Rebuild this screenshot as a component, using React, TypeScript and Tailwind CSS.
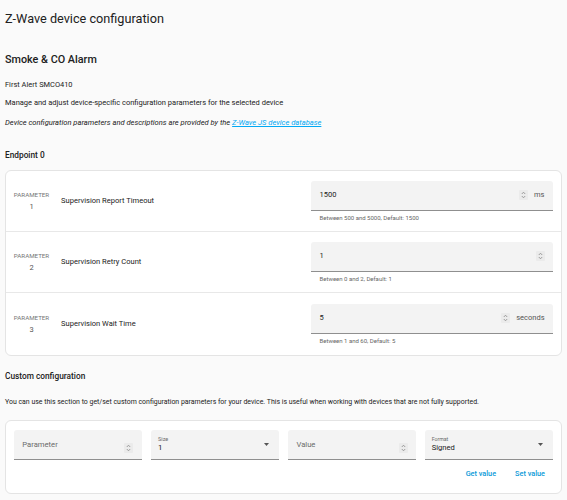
import React from "react";

function Spinner() {
  return (
    <span className="flex h-[10px] w-[9px] shrink-0 items-center justify-center rounded-[1px] bg-[#ebebeb]">
      <svg width="5" height="8" viewBox="0 0 5 8" fill="none" stroke="#8a8a8a" strokeWidth="0.8">
        <path d="M0.8 3 L2.5 1.2 L4.2 3" />
        <path d="M0.8 5 L2.5 6.8 L4.2 5" />
      </svg>
    </span>
  );
}

function Caret() {
  return (
    <svg width="5" height="3" viewBox="0 0 5 3" className="shrink-0">
      <path d="M0 0 L5 0 L2.5 3 Z" fill="#555" />
    </svg>
  );
}

type Row = { n: number; name: string; value: string; unit?: string; help: string };

const rows: Row[] = [
  { n: 1, name: "Supervision Report Timeout", value: "1500", unit: "ms", help: "Between 500 and 5000, Default: 1500" },
  { n: 2, name: "Supervision Retry Count", value: "1", help: "Between 0 and 2, Default: 1" },
  { n: 3, name: "Supervision Wait Time", value: "5", unit: "seconds", help: "Between 1 and 60, Default: 5" },
];

export default function App() {
  return (
    <div className="min-h-[500px] bg-[#fafafa] px-[5px] font-['Roboto',sans-serif] text-[#212121]">
      <h1 className="pt-[9px] text-[12.7px] leading-[20px] font-normal">Z-Wave device configuration</h1>
      <h2 className="mt-[24px] text-[10.8px] leading-[14px] font-medium">Smoke &amp; CO Alarm</h2>
      <p className="mt-[12.5px] text-[7.45px] leading-[10px]">First Alert SMCO410</p>
      <p className="mt-[8.5px] text-[7.5px] leading-[10px]">
        Manage and adjust device-specific configuration parameters for the selected device
      </p>
      <p className="mt-[10px] text-[7.55px] leading-[10px] italic">
        Device configuration parameters and descriptions are provided by the{" "}
        <a className="text-[#03a9f4] underline">Z-Wave JS device database</a>
      </p>
      <h3 className="mt-[20.5px] text-[8.3px] leading-[12px] font-medium">Endpoint 0</h3>

      <div className="mt-[9.5px] rounded-[6px] border border-[#e4e4e4] bg-white">
        {rows.map((r, i) => (
          <div
            key={r.n}
            className={
              "flex items-center pl-[8px] pr-[8px] " +
              (i < rows.length - 1 ? "h-[61px] border-b border-[#e8e8e8]" : "h-[62px]")
            }
          >
            <div className="flex w-[35px] flex-col items-center text-[#757575]">
              <span className="text-[6.2px] leading-[8px] uppercase">Parameter</span>
              <span className="mt-[3px] text-[7.5px] leading-[9px] text-[#555]">{r.n}</span>
            </div>
            <div className="ml-[12px] text-[7.55px] leading-[10px]">{r.name}</div>
            <div className="ml-auto w-[242px]">
              <div className="flex h-[30px] items-center rounded-t-[3px] border-b border-[#8f8f8f] bg-[#f3f3f3] pl-[8.5px] pr-[8.5px]">
                <span className="flex-1 text-[7.5px] leading-[10px]">{r.value}</span>
                <Spinner />
                {r.unit && <span className="ml-[6px] text-[7.5px] leading-[10px] text-[#555]">{r.unit}</span>}
              </div>
              <div className="mt-[3px] pl-[8.5px] text-[6px] leading-[8px] text-[#666]">{r.help}</div>
            </div>
          </div>
        ))}
      </div>

      <h3 className="mt-[14px] text-[8.3px] leading-[12px] font-medium">Custom configuration</h3>
      <p className="mt-[15px] text-[6.95px] leading-[10px]">
        You can use this section to get/set custom configuration parameters for your device. This is useful when working with devices that are not fully supported.
      </p>

      <div className="mt-[13px] rounded-[6px] border border-[#e4e4e4] bg-white px-[8px] pt-[9px] pb-[14px]">
        <div className="grid grid-cols-4 gap-[9.3px]">
          <div className="flex h-[30px] items-center rounded-t-[3px] border-b border-[#8f8f8f] bg-[#f3f3f3] pl-[8.3px] pr-[8.3px]">
            <span className="flex-1 text-[7.65px] leading-[10px] text-[#6b6b6b]">Parameter</span>
            <span className="mt-[6px]"><Spinner /></span>
          </div>
          <div className="flex h-[30px] items-center rounded-t-[3px] border-b border-[#8f8f8f] bg-[#f3f3f3] pl-[7px] pr-[10px]">
            <div className="flex flex-1 flex-col">
              <span className="text-[5.5px] leading-[7px] text-[#6b6b6b]">Size</span>
              <span className="text-[7.8px] leading-[10px]">1</span>
            </div>
            <Caret />
          </div>
          <div className="flex h-[30px] items-center rounded-t-[3px] border-b border-[#8f8f8f] bg-[#f3f3f3] pl-[8.3px] pr-[8.3px]">
            <span className="flex-1 text-[7.65px] leading-[10px] text-[#6b6b6b]">Value</span>
            <span className="mt-[6px]"><Spinner /></span>
          </div>
          <div className="flex h-[30px] items-center rounded-t-[3px] border-b border-[#8f8f8f] bg-[#f3f3f3] pl-[6.5px] pr-[10px]">
            <div className="flex flex-1 flex-col">
              <span className="text-[5.2px] leading-[7px] text-[#6b6b6b]">Format</span>
              <span className="text-[7.6px] leading-[10px]">Signed</span>
            </div>
            <Caret />
          </div>
        </div>
        <div className="mt-[9px] flex justify-end gap-[3px]">
          <button className="px-[8px] text-[7.3px] leading-[10px] font-medium text-[#0a9ad8]">Get value</button>
          <button className="px-[8px] text-[7.3px] leading-[10px] font-medium text-[#0a9ad8]">Set value</button>
        </div>
      </div>
    </div>
  );
}
